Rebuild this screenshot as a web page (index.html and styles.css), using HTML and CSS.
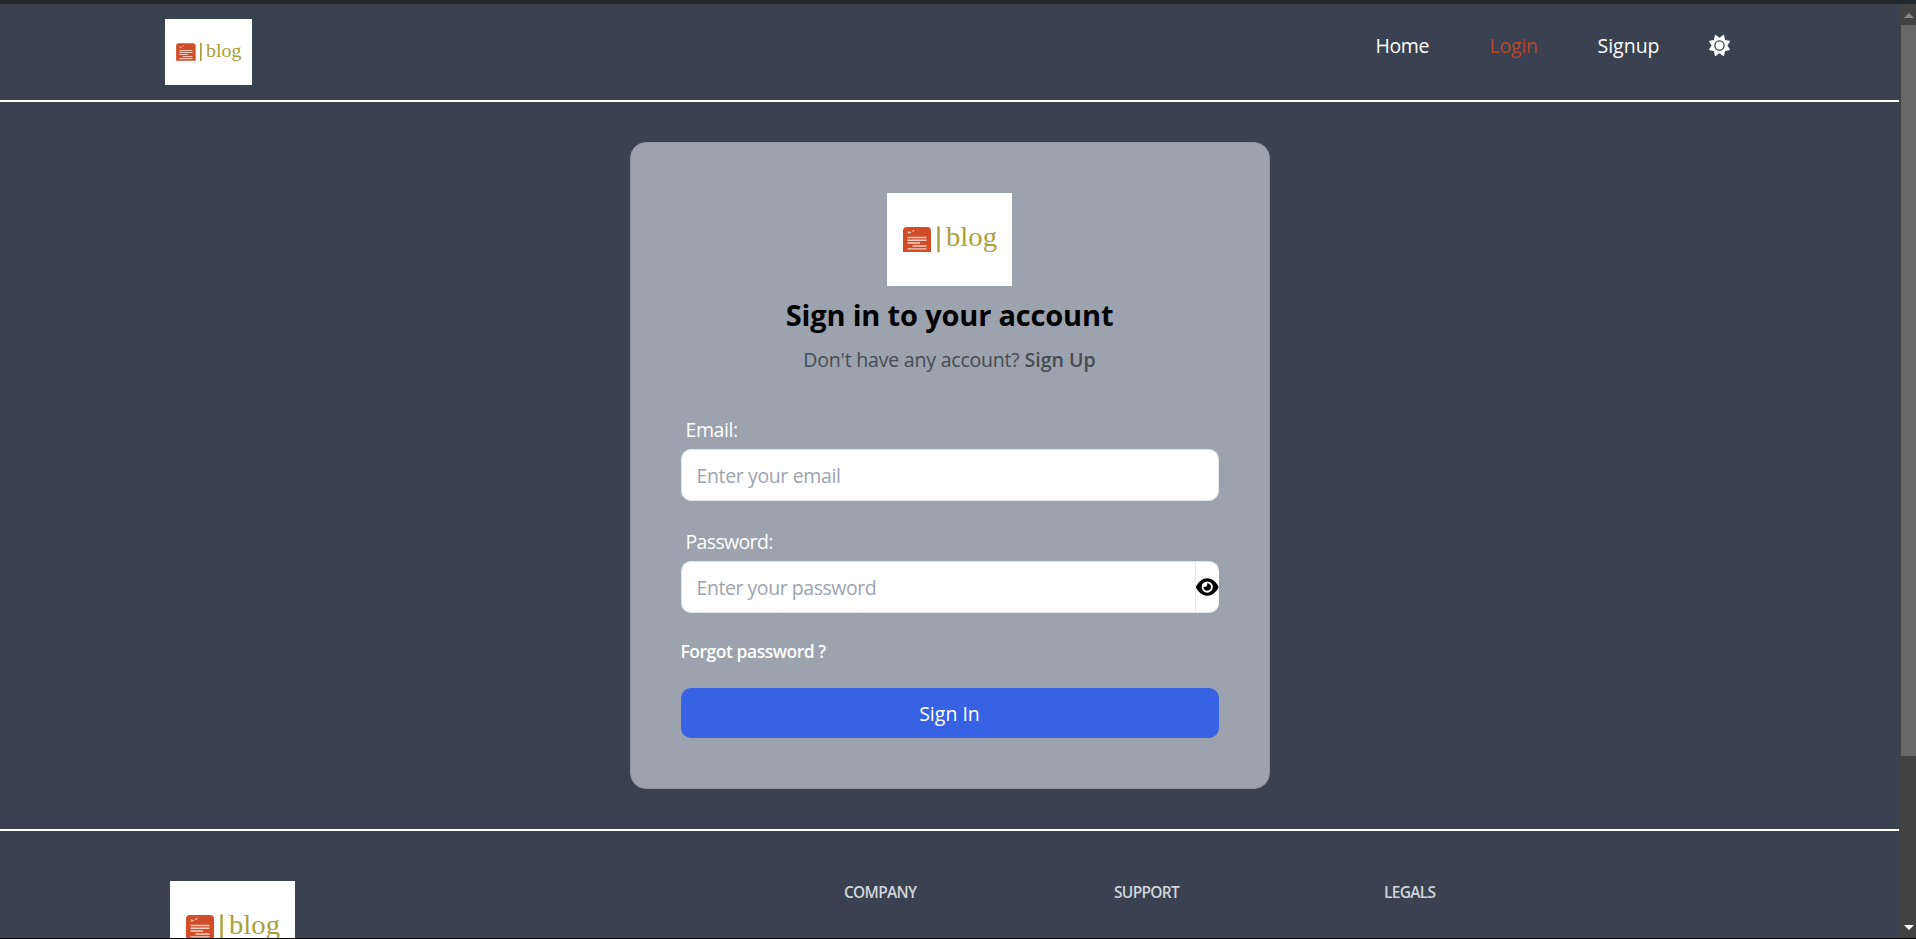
FILE: index.html
```
<!DOCTYPE html>
<html lang="en">
<head>
<meta charset="utf-8">
<title>Blog - Login</title>
<link rel="stylesheet" href="styles.css">
</head>
<body>
<svg class="defs">
  <defs>
  <symbol id="logo" viewBox="0 0 125 93" preserveAspectRatio="none">
    <rect width="125" height="93" fill="#fff"/>
    <path d="M16 59V38q0-4 4-4h20q4 0 4 4v21z" fill="#d14d27"/>
    <path d="M21.500 40.500v-2M22.500 40l1.500-1M25.500 38.500l1.500-1.200" stroke="#f6d5ca" stroke-width="1.3"/>
    <path d="M20.5 44.5h19M20.5 47.2h19M20.5 50h12.500M25.500 53h14M20.500 55.900h19" stroke="#f6cfc2" stroke-width="1.400"/>
    <path d="M51.500 33.300v26" stroke="#aaa03a" stroke-width="2.400"/>
    <text x="59" y="52.900" textLength="51" lengthAdjust="spacingAndGlyphs" class="logo-word">blog</text>
  </symbol>
  </defs>
</svg>
<div class="window">
  <div class="page">
    <header class="header">
      <svg class="logo-sm"><use href="#logo" width="87" height="66"/></svg>
      <nav class="nav">
        <a class="home">Home</a>
        <a class="login">Login</a>
        <a class="signup">Signup</a>
        <svg class="sun" viewBox="0 0 512 512"><path fill="#fff" d="M361.500 1.200c5 2.100 8.600 6.600 9.600 11.900L391 121l107.900 19.800c5.300 1 9.800 4.600 11.900 9.600s1.500 10.700-1.600 15.200L446.900 256l62.300 90.300c3.100 4.500 3.700 10.200 1.600 15.200s-6.600 8.600-11.900 9.600L391 391 371.100 498.900c-1 5.300-4.600 9.800-9.600 11.900s-10.700 1.500-15.200-1.600L256 446.900l-90.300 62.300c-4.500 3.100-10.200 3.700-15.200 1.600s-8.600-6.600-9.600-11.900L121 391 13.100 371.100c-5.300-1-9.800-4.600-11.900-9.600s-1.500-10.700 1.600-15.200L65.100 256 2.800 165.700c-3.100-4.500-3.700-10.200-1.600-15.200s6.600-8.600 11.900-9.600L121 121 140.900 13.100c1-5.300 4.600-9.800 9.600-11.900s10.700-1.500 15.200 1.600L256 65.100 346.300 2.800c4.500-3.100 10.200-3.700 15.200-1.600zM160 256a96 96 0 1 1 192 0 96 96 0 1 1 -192 0zm224 0a128 128 0 1 0 -256 0 128 128 0 1 0 256 0z"/></svg>
      </nav>
    </header>
    <main class="main">
      <form class="card">
        <svg class="logo-lg"><use href="#logo" width="125" height="93"/></svg>
        <h2 class="title">Sign in to your account</h2>
        <p class="sub"><span class="subtext">Don't have any account?</span><a class="signup-link">Sign Up</a></p>
        <label class="label email">Email:</label>
        <div class="input"><span class="ph-email">Enter your email</span></div>
        <label class="label second">Password:</label>
        <div class="input with-eye"><span class="ph-pass">Enter your password</span>
          <span class="eye-box"><svg class="eye" viewBox="0 0 576 512"><path d="M288 32c-80.800 0-145.500 36.800-192.600 80.600C48.600 156 17.300 208 2.500 243.700c-3.300 7.900-3.300 16.700 0 24.600C17.300 304 48.600 356 95.400 399.400C142.500 443.200 207.200 480 288 480s145.500-36.800 192.600-80.600c46.800-43.500 78.100-95.400 93-131.100c3.300-7.900 3.300-16.700 0-24.600c-14.900-35.700-46.200-87.700-93-131.100C433.500 68.800 368.800 32 288 32zM144 256a144 144 0 1 1 288 0 144 144 0 1 1 -288 0zm144-64c0 35.300-28.700 64-64 64c-7.100 0-13.900-1.200-20.300-3.300c-5.500-1.800-11.900 1.600-11.700 7.400c.3 6.900 1.300 13.800 3.200 20.700c13.700 51.200 66.400 81.600 117.600 67.900s81.600-66.400 67.900-117.600c-11.100-41.500-47.800-69.400-88.600-71.100c-5.800-.2-9.200 6.100-7.400 11.700c2.100 6.400 3.300 13.200 3.300 20.300z"/></svg></span>
        </div>
        <a class="forgot">Forgot password ?</a>
        <button class="btn" type="button">Sign In</button>
      </form>
    </main>
    <footer class="footer">
      <svg class="logo-lg"><use href="#logo" width="125" height="93"/></svg>
      <div class="cols">
        <h3 class="col">COMPANY</h3>
        <h3 class="col">SUPPORT</h3>
        <h3 class="col">LEGALS</h3>
      </div>
    </footer>
  </div>
  <div class="scrollbar"><i class="arrow up"></i><i class="thumb"></i><i class="arrow down"></i></div>
</div>
</body>
</html>
```
FILE: styles.css
```
* { box-sizing: border-box; }
body {
  margin: 0;
  height: 939px;
  overflow: hidden;
  background: #3a4150;
  font-family: "Open Sans", "Noto Sans", sans-serif;
  font-size: 19.5px;
  line-height: 24px;
  color: #fff;
}
.defs { display: none; }
.window {
  display: flex;
  height: 939px;
  border-top: 4px solid #22292c;
  border-bottom: 1px solid #000;
}
.page { width: 1899px; overflow: hidden; }
.logo-word { font-family: "Liberation Serif", serif; font-size: 27px; fill: #aaa03a; }
.header {
  display: flex;
  justify-content: space-between;
  height: 98px;
  padding: 15px 169px 0 165px;
  border-bottom: 2px solid #fff;
}
.logo-sm { width: 87px; height: 66px; }
.logo-lg { display: block; flex: none; width: 125px; height: 93px; }
.nav { display: flex; padding-top: 15px; }
.home { width: 114px; letter-spacing: -0.4px; }
.login { width: 108px; letter-spacing: -0.2px; color: #b7472d; }
.signup { width: 111.500px; }
.sun { width: 21px; height: 21px; margin-top: 1px; }
.main { padding: 40px 0; }
.card {
  display: flex;
  flex-direction: column;
  width: 640px;
  height: 647px;
  margin: 0 auto;
  padding: 50px;
  border: 1px solid #8c929e;
  border-radius: 16px;
  background: #9ca2ae;
}
.card > * { flex: none; }
.card .logo-lg { align-self: center; }
.title {
  margin: 9px 0 0;
  text-align: center;
  color: #000;
  font-size: 29px;
  line-height: 40px;
  font-weight: 700;
  letter-spacing: -0.17px;
}
.sub {
  display: flex;
  justify-content: center;
  gap: 5px;
  margin: 13px 0 0;
  color: #474b53;
}
.subtext { letter-spacing: -0.2px; }
.signup-link { font-weight: 600; }
.label { margin-top: 46px; padding-left: 5px; }
.label.email { letter-spacing: -0.4px; }
.label.second { margin-top: 29px; letter-spacing: -0.65px; }
.input {
  display: flex;
  align-items: center;
  height: 52px;
  margin-top: 7px;
  padding-left: 15px;
  border: 1px solid #e5e7eb;
  border-radius: 10px;
  background: #fff;
  color: #9ca3af;
}
.ph-email { padding-top: 2px; letter-spacing: -0.37px; }
.ph-pass { padding-top: 2px; letter-spacing: -0.45px; }
.with-eye { border-right: 0; }
.eye-box {
  display: flex;
  align-items: center;
  height: 50px;
  margin-left: auto;
  border-left: 1px solid #e5e7eb;
}
.eye { width: 22.500px; height: 20px; margin-bottom: 1px; }
.forgot { margin-top: 26px; font-size: 17.500px; font-weight: 600; letter-spacing: -0.48px; }
.btn {
  height: 50px;
  margin-top: 25px;
  padding: 2px 0 0;
  border: 0;
  border-radius: 10px;
  background: #3762e4;
  color: #fff;
  font: inherit;
}
.footer {
  display: flex;
  padding: 50px 170px 0;
  border-top: 2px solid #fff;
}
.cols { display: grid; grid-template-columns: repeat(3, 270px); margin-left: 549px; }
.col {
  margin: 0;
  font-size: 15.500px;
  line-height: 22px;
  font-weight: 600;
  letter-spacing: -0.7px;
  color: #d1d5db;
}
.scrollbar {
  display: flex;
  flex-direction: column;
  align-items: center;
  width: 17px;
  padding-left: 2px;
  background: #424242;
}
.thumb { width: 15px; height: 731px; background: #686868; }
.arrow { border: 5px solid transparent; }
.arrow.up { height: 5px; margin: 9px 0 7px; border-top: 0; border-bottom-color: #858585; }
.arrow.down { margin: auto 0 8px; border-bottom: 0; border-top-color: #fff; }
```
